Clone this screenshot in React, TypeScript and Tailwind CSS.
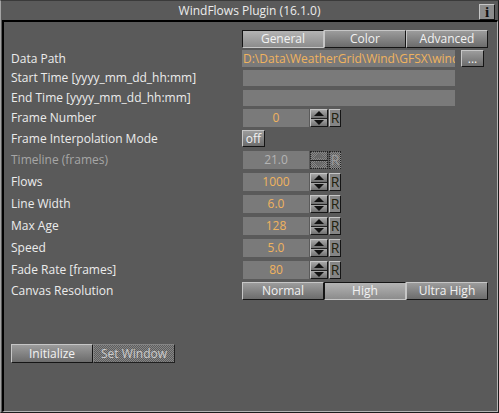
import React from 'react';

const raised =
  'border border-t-[#c6c6c6] border-l-[#c6c6c6] border-r-[#151515] border-b-[#151515]';
const sunken =
  'border border-t-[#151515] border-l-[#151515] border-r-[#c6c6c6] border-b-[#c6c6c6]';
const checker =
  'bg-[repeating-conic-gradient(#8a8a8a_0%_25%,#5e5e5e_0%_50%)] bg-[length:2px_2px]';

function Btn({
  label,
  active,
  className = '',
}: {
  label: string;
  active?: boolean;
  className?: string;
}) {
  return (
    <div
      className={`flex items-center justify-center text-[#f2f2f2] ${
        active
          ? `${sunken} bg-linear-to-b from-[#b4b4b4] to-[#8c8c8c]`
          : `${raised} bg-linear-to-b from-[#9c9c9c] to-[#6c6c6c]`
      } ${className}`}
    >
      {label}
    </div>
  );
}

function Spinner({ disabled }: { disabled?: boolean }) {
  const half = `flex-1 flex items-center justify-center ${
    disabled ? checker : 'bg-linear-to-b from-[#a8a8a8] to-[#707070]'
  }`;
  return (
    <div
      className={`w-[18px] h-[18px] ml-px flex flex-col ${
        disabled ? 'border border-dotted border-[#222]' : raised
      }`}
    >
      <div className={`${half} border-b border-[#222]`}>
        <svg width="10" height="5" viewBox="0 0 10 5">
          <path d="M0 5 L5 0 L10 5 Z" fill={disabled ? '#6a6a6a' : '#111'} />
        </svg>
      </div>
      <div className={half}>
        <svg width="10" height="5" viewBox="0 0 10 5">
          <path d="M0 0 L5 5 L10 0 Z" fill={disabled ? '#6a6a6a' : '#111'} />
        </svg>
      </div>
    </div>
  );
}

function RBtn({ disabled }: { disabled?: boolean }) {
  return (
    <div
      className={`w-[12px] h-[18px] ml-px flex items-center justify-center text-[14px] ${
        disabled
          ? `${checker} border border-dotted border-[#222] text-[#9a9a9a]`
          : `${raised} bg-[#858585] text-[#22220f]`
      }`}
    >
      R
    </div>
  );
}

function NumField({ value, disabled }: { value: string; disabled?: boolean }) {
  return (
    <div className="flex items-center ml-px">
      <div
        className={`w-[66px] h-[18px] bg-[#7a7a7a] flex items-center justify-center ${
          disabled ? 'text-[#b4b4b4]' : 'text-[#f0b35e]'
        }`}
      >
        {value}
      </div>
      <Spinner disabled={disabled} />
      <RBtn disabled={disabled} />
    </div>
  );
}

function Row({
  label,
  children,
  h,
  mt,
  dim,
}: {
  label: string;
  children?: React.ReactNode;
  h: string;
  mt: string;
  dim?: boolean;
}) {
  return (
    <div className={`flex items-center ${h} ${mt}`}>
      <div className={`w-[231px] ${dim ? 'text-[#a6a6a6]' : 'text-[#ececec]'}`}>{label}</div>
      {children}
    </div>
  );
}

export default function App() {
  const numRows = [
    { label: 'Flows', value: '1000' },
    { label: 'Line Width', value: '6.0' },
    { label: 'Max Age', value: '128' },
    { label: 'Speed', value: '5.0' },
    { label: 'Fade Rate [frames]', value: '80' },
  ];

  return (
    <div
      className="w-[499px] h-[413px] bg-[#5a5a5a] border-l border-l-[#a4a4a4] border-t border-t-[#3a3a3a] border-r border-r-[#1c1c1c] border-b border-b-[#1c1c1c] flex flex-col text-[12px] leading-none"
      style={{ fontFamily: '"Open Sans", "Liberation Sans", sans-serif' }}
    >
      {/* title bar */}
      <div className="h-[19px] grid grid-cols-[1fr_auto_1fr] items-center">
        <div />
        <div className="text-[#ececec] text-[12px] pt-px">WindFlows Plugin (16.1.0)</div>
        <div className="flex justify-end pr-[3px] self-end">
          <div
            className={`w-[16px] h-[16px] flex items-center justify-center bg-[#8c8c8c] ${raised} text-[#111] text-[15px] font-bold`}
            style={{ fontFamily: '"Liberation Serif", serif' }}
          >
            i
          </div>
        </div>
      </div>

      {/* panel */}
      <div className="flex-1 ml-px border-t-2 border-l-2 border-black border-r border-b border-r-[#b4b4b4] border-b-[#b4b4b4] pl-[7px] pt-[8px] flex flex-col">
        <div className="flex h-[18px] pl-[231px]">
          <Btn label="General" active className="w-[82px]" />
          <Btn label="Color" className="w-[82px]" />
          <Btn label="Advanced" className="w-[82px]" />
        </div>

        <Row label="Data Path" h="h-[17px]" mt="mt-[2px]">
          <div className="w-[213px] h-[17px] bg-[#7a7a7a] text-[#f0b35e] flex items-center pl-px overflow-hidden whitespace-nowrap">
            D:\Data\WeatherGrid\Wind\GFSX\wind_2017
          </div>
          <Btn label="..." className="w-[23px] h-[17px] ml-[6px]" />
        </Row>

        <Row label="Start Time [yyyy_mm_dd_hh:mm]" h="h-[16px]" mt="mt-[3px]">
          <div className="w-[212px] h-[16px] bg-[#7a7a7a] ml-px" />
        </Row>
        <Row label="End Time [yyyy_mm_dd_hh:mm]" h="h-[16px]" mt="mt-[4px]">
          <div className="w-[212px] h-[16px] bg-[#7a7a7a] ml-px" />
        </Row>

        <Row label="Frame Number" h="h-[18px]" mt="mt-[3px]">
          <NumField value="0" />
        </Row>

        <Row label="Frame Interpolation Mode" h="h-[17px]" mt="mt-[3px]">
          <Btn label="off" className="w-[23px] h-[17px]" />
        </Row>

        <Row label="Timeline (frames)" h="h-[18px]" mt="mt-[4px]" dim>
          <NumField value="21.0" disabled />
        </Row>

        {numRows.map((r) => (
          <Row key={r.label} label={r.label} h="h-[18px]" mt="mt-[4px]">
            <NumField value={r.value} />
          </Row>
        ))}

        <Row label="Canvas Resolution" h="h-[18px]" mt="mt-[3px]">
          <Btn label="Normal" className="w-[82px] h-[18px]" />
          <Btn label="High" active className="w-[82px] h-[18px]" />
          <Btn label="Ultra High" className="w-[82px] h-[18px]" />
        </Row>

        <div className="flex mt-[44px] h-[19px]">
          <Btn label="Initialize" className="w-[82px]" />
          <div
            className={`w-[82px] flex items-center justify-center ${checker} border border-[#1a1a1a] border-t-[#8a8a8a] border-l-[#8a8a8a] text-[#d8d8d8] opacity-90`}
          >
            Set Window
          </div>
        </div>
      </div>
    </div>
  );
}
